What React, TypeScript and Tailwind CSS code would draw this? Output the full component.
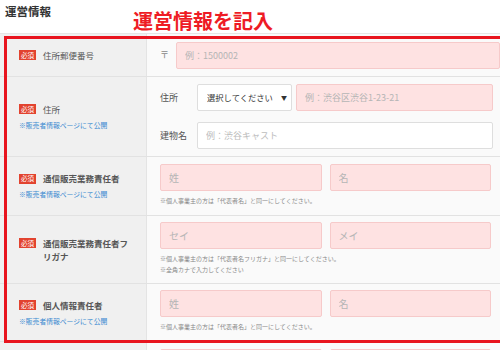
import React from 'react'

const pink = 'h-[27px] w-full rounded-[2px] border border-[#f6caca] bg-[#fee2e2] px-2 text-[9px] text-[#333] placeholder:text-[#b5b5b5] outline-none'
const white = 'h-[27px] w-full rounded-[2px] border border-[#dedede] bg-white px-2 text-[9px] text-[#333] placeholder:text-[#bdbdbd] outline-none'

function Badge() {
  return (
    <span className="flex h-[10px] w-[17px] shrink-0 items-center justify-center bg-[#e2432f] text-[6.5px] leading-none text-white">
      必須
    </span>
  )
}

function Label({ text, pub, bold }: { text: string; pub?: boolean; bold?: boolean }) {
  return (
    <div className="flex w-[147px] shrink-0 items-center border-r border-[#e4e4e4] bg-[#f0f0f0] pl-[19px] pr-[12px]">
      <div>
        <div className="flex items-start gap-[7px]">
          <div className="flex h-[13px] items-center">
            <Badge />
          </div>
          <span className={`text-[8.5px] leading-[13px] text-[#555] ${bold ? 'font-bold' : ''}`}>{text}</span>
        </div>
        {pub && <p className="mt-[3px] text-[6.8px] leading-[12px] text-[#3b8bd1]">※販売者情報ページにて公開</p>}
      </div>
    </div>
  )
}

function Note({ children }: { children: React.ReactNode }) {
  return <p className="text-[6px] leading-[11px] text-[#888]">{children}</p>
}

function NameInputs({ a, b }: { a: string; b: string }) {
  return (
    <div className="grid grid-cols-2 gap-2">
      <input className={`${pink} text-[10px]`} placeholder={a} readOnly />
      <input className={`${pink} text-[10px]`} placeholder={b} readOnly />
    </div>
  )
}

export default function App() {
  return (
    <div className="relative h-[350px] w-[500px] overflow-hidden bg-white font-['Noto_Sans_CJK_JP',sans-serif]">
      <div className="h-[33px] px-[5px] pt-[3px]">
        <h2 className="text-[11.5px] font-bold leading-[16px] text-[#333]">運営情報</h2>
      </div>

      <div className="border-t border-[#e6e6e6]">
        <div className="flex h-[43px] border-b border-[#e2e2e2]">
          <Label text="住所郵便番号" />
          <div className="flex flex-1 items-center gap-[7px] bg-[#fafafa] pl-[13px]">
            <span className="text-[9px] text-[#888]">〒</span>
            <input className={`${pink} w-[162px]`} placeholder="例：1500002" readOnly />
          </div>
        </div>

        <div className="flex h-[80px] border-b border-[#e2e2e2]">
          <Label text="住所" pub />
          <div className="flex flex-1 flex-col gap-[11px] bg-[#fafafa] pl-[13px] pr-[7px] pt-[7px]">
            <div className="flex items-center">
              <span className="w-[37px] shrink-0 text-[9px] text-[#555]">住所</span>
              <div className="flex h-[27px] w-[95px] shrink-0 items-center justify-between overflow-hidden rounded-[2px] border border-[#dedede] bg-white pl-[9px] pr-[4px]">
                <span className="overflow-hidden whitespace-nowrap text-[8.3px] text-[#333]">選択してください</span>
                <span className="ml-[3px] shrink-0 text-[6px] text-[#333]">▼</span>
              </div>
              <input className={`${pink} ml-1`} placeholder="例：渋谷区渋谷1-23-21" readOnly />
            </div>
            <div className="flex items-center">
              <span className="w-[37px] shrink-0 text-[9px] text-[#555]">建物名</span>
              <input className={white} placeholder="例：渋谷キャスト" readOnly />
            </div>
          </div>
        </div>

        <div className="flex h-[59px] border-b border-[#e2e2e2]">
          <Label text="通信販売業務責任者" pub bold />
          <div className="flex-1 bg-[#fafafa] pl-[13px] pr-[9px] pt-[7px]">
            <NameInputs a="姓" b="名" />
            <div className="mt-[4px]">
              <Note>※個人事業主の方は「代表者名」と同一にしてください。</Note>
            </div>
          </div>
        </div>

        <div className="flex h-[68px] border-b border-[#e2e2e2]">
          <Label text="通信販売業務責任者フリガナ" bold />
          <div className="flex-1 bg-[#fafafa] pl-[13px] pr-[9px] pt-[6px]">
            <NameInputs a="セイ" b="メイ" />
            <div className="mt-[4px]">
              <Note>※個人事業主の方は「代表者名フリガナ」と同一にしてください。</Note>
              <Note>※全角カナで入力してください</Note>
            </div>
          </div>
        </div>

        <div className="flex h-[58px] border-b border-[#e2e2e2]">
          <Label text="個人情報責任者" pub bold />
          <div className="flex-1 bg-[#fafafa] pl-[13px] pr-[9px] pt-[6px]">
            <NameInputs a="姓" b="名" />
            <div className="mt-[4px]">
              <Note>※個人事業主の方は「代表者名」と同一にしてください。</Note>
            </div>
          </div>
        </div>

        {/* next row, only its top edge is visible */}
        <div className="flex h-[58px] border-b border-[#e2e2e2]">
          <div className="w-[147px] shrink-0 border-r border-[#e4e4e4] bg-[#f0f0f0]" />
          <div className="flex-1 bg-[#fafafa] pl-[13px] pr-[9px] pt-[7px]">
            <NameInputs a="" b="" />
          </div>
        </div>
      </div>

      {/* annotation overlay */}
      <div className="pointer-events-none absolute left-[4px] top-[36px] h-[307px] w-[510px] border-[3px] border-[#e8141e]" />
      <p className="absolute left-[133px] top-[10px] text-[20px] font-bold leading-[22px] text-[#ee1c25]">運営情報を記入</p>
    </div>
  )
}
